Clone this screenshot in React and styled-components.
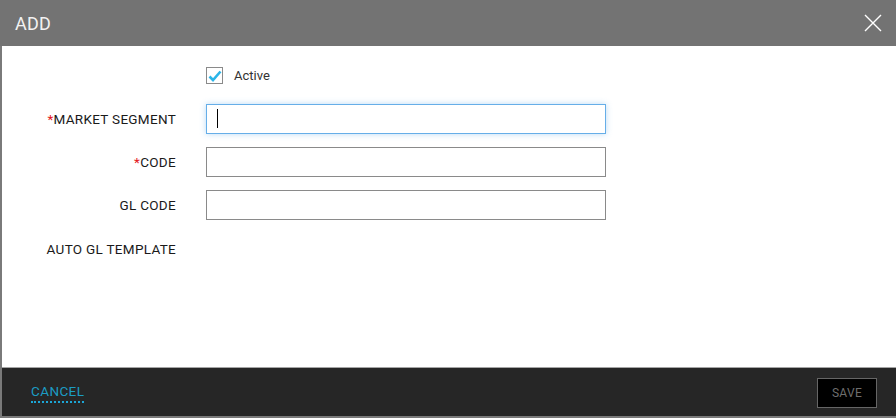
import styled, { createGlobalStyle } from "styled-components";

const Global = createGlobalStyle`
  html, body { margin: 0; padding: 0; background: #ffffff; }
  * { box-sizing: border-box; }
`

const Dialog = styled.div`
  width: 896px;
  height: 418px;
  display: flex;
  flex-direction: column;
  font-family: Roboto, "Liberation Sans", sans-serif;
  border-left: 2px solid #7a7a7a;
  border-bottom: 2px solid #7a7a7a;
`
const Header = styled.div`
  height: 46px;
  flex: none;
  background: #737373;
  display: flex;
  align-items: center;
  justify-content: space-between;
  padding: 0 14px 0 15px;
  margin-left: -2px;
`
const Title = styled.h1`
  margin: 0;
  font-size: 18px;
  font-weight: 400;
  color: #f2f2f2;
  letter-spacing: 0.2px;
`
const Close = styled.button`
  border: 0;
  background: none;
  padding: 0;
  width: 18px;
  height: 18px;
  cursor: pointer;
  display: flex;
`
const Body = styled.div`
  flex: 1;
  background: #ffffff;
  padding-top: 21px;
  display: flex;
  flex-direction: column;
`
const Row = styled.div`
  display: grid;
  grid-template-columns: 174px 400px;
  column-gap: 30px;
  align-items: center;
  height: ${p => p.h}px;
`
const Label = styled.label`
  text-align: right;
  font-size: 13.5px;
  color: #1a1a1a;
  letter-spacing: 0.3px;
`
const Req = styled.span`
  color: #e3161b;
`
const CheckWrap = styled.label`
  grid-column: 2;
  display: flex;
  align-items: center;
  gap: 11px;
  font-size: 13px;
  color: #333;
`
const Box = styled.span`
  width: 17px;
  height: 17px;
  border: 1px solid #8a8a8a;
  background: #fff;
  display: flex;
  align-items: center;
  justify-content: center;
`
const Input = styled.input`
  width: 400px;
  height: 30px;
  border: 1px solid ${p => (p.focused ? "#66aee8" : "#8a8a8a")};
  box-shadow: ${p => (p.focused ? "0 0 6px rgba(102,174,232,0.45)" : "none")};
  outline: none;
  padding: 0 10px;
  font-size: 14px;
  font-family: inherit;
  background: #fff;
`
const Caret = styled.span`
  position: absolute;
  left: 11px;
  top: 5px;
  width: 1px;
  height: 19px;
  background: #000;
`
const Field = styled.div`
  position: relative;
  width: 400px;
`
const Footer = styled.div`
  height: 49px;
  flex: none;
  background: #262626;
  border-top: 1px solid #a5a5a5;
  display: flex;
  align-items: center;
  justify-content: space-between;
  padding: 0 19px 0 29px;
`
const Cancel = styled.button`
  border: 0;
  background: none;
  padding: 0 0 2px 0;
  font-family: inherit;
  font-size: 13.5px;
  color: #1c9cc3;
  border-bottom: 2px dotted #1ca6d6;
  letter-spacing: 0.4px;
  margin-top: 2px;
  cursor: pointer;
`
const Save = styled.button`
  width: 60px;
  height: 30px;
  background: #000;
  border: 1px solid #666;
  color: #6e6e6e;
  font-family: inherit;
  font-size: 12px;
  letter-spacing: 0.3px;
  margin-top: 1px;
`

export default function App() {
  return (
    <>
      <Global />
      <Dialog>
        <Header>
          <Title>ADD</Title>
          <Close aria-label="close">
            <svg width="18" height="18" viewBox="0 0 18 18">
              <path d="M1 1 L17 17 M17 1 L1 17" stroke="#ffffff" strokeWidth="1.4" />
            </svg>
          </Close>
        </Header>
        <Body>
          <Row h={17}>
            <CheckWrap>
              <Box>
                <svg width="14" height="12" viewBox="0 0 14 12">
                  <path d="M1.5 6.5 L5 10 L12.5 1.5" stroke="#2bb5e8" strokeWidth="2.6" fill="none" />
                </svg>
              </Box>
              Active
            </CheckWrap>
          </Row>
          <Row h={20} />
          <Row h={30}>
            <Label><Req>*</Req>MARKET SEGMENT</Label>
            <Field>
              <Input focused />
              <Caret />
            </Field>
          </Row>
          <Row h={13} />
          <Row h={30}>
            <Label><Req>*</Req>CODE</Label>
            <Input />
          </Row>
          <Row h={13} />
          <Row h={30}>
            <Label>GL CODE</Label>
            <Input />
          </Row>
          <Row h={14} />
          <Row h={30}>
            <Label>AUTO GL TEMPLATE</Label>
          </Row>
        </Body>
        <Footer>
          <Cancel>CANCEL</Cancel>
          <Save>SAVE</Save>
        </Footer>
      </Dialog>
    </>
  )
}
